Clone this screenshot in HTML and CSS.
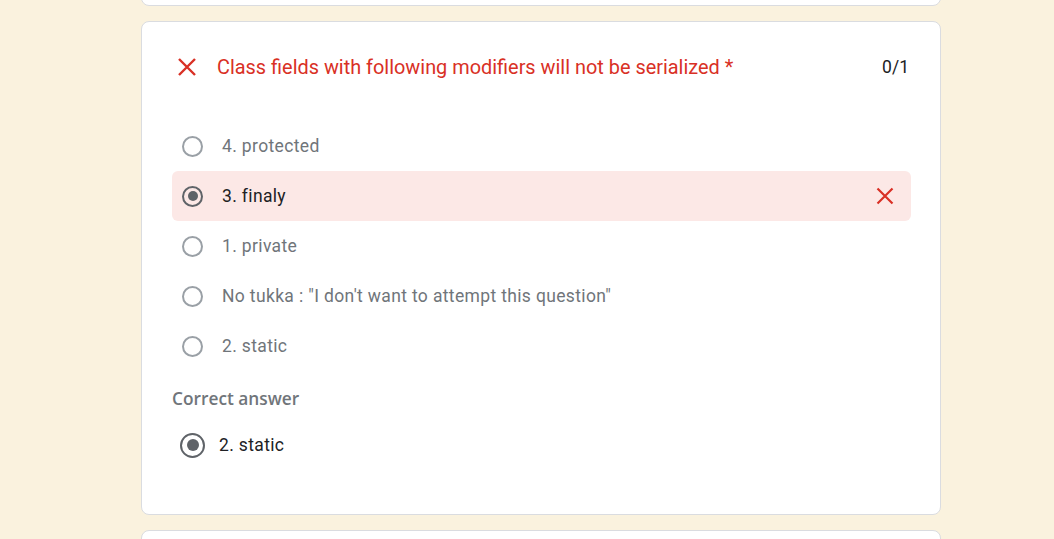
FILE: index.html
```html
<!DOCTYPE html>
<html>
<head>
<meta charset="utf-8">
<link rel="stylesheet" href="styles.css">
</head>
<body>
<div class="page">
  <div class="card card-prev"></div>
  <div class="card question">
    <div class="q-header">
      <svg class="x-icon head-x" viewBox="0 0 20 20" width="20" height="20"><path d="M2 2 L18 18 M18 2 L2 18" stroke="#d93025" stroke-width="2.4" fill="none"/></svg>
      <div class="q-title">Class fields with following modifiers will not be serialized <span class="req">*</span></div>
      <div class="q-score">0/1</div>
    </div>
    <div class="options">
      <div class="opt"><span class="radio"></span><span class="opt-text">4. protected</span></div>
      <div class="opt opt-wrong"><span class="radio checked"></span><span class="opt-text sel">3. finaly</span>
        <svg class="x-icon row-x" viewBox="0 0 18 18" width="18" height="18"><path d="M1.5 1.5 L16.5 16.5 M16.5 1.5 L1.5 16.5" stroke="#d93025" stroke-width="2.2" fill="none"/></svg>
      </div>
      <div class="opt"><span class="radio"></span><span class="opt-text">1. private</span></div>
      <div class="opt"><span class="radio"></span><span class="opt-text">No tukka : "I don't want to attempt this question"</span></div>
      <div class="opt"><span class="radio"></span><span class="opt-text">2. static</span></div>
    </div>
    <div class="correct-label">Correct answer</div>
    <div class="correct-row"><span class="radio checked"></span><span class="opt-text sel">2. static</span></div>
  </div>
  <div class="card card-next"></div>
</div>
</body>
</html>
```
FILE: styles.css
```css
* { box-sizing: border-box; }
html, body { margin: 0; padding: 0; }
body {
  background: #faf2de;
  font-family: Roboto, "Noto Sans", Arial, sans-serif;
  width: 1054px;
  height: 539px;
  overflow: hidden;
}
.page {
  margin-left: 141px;
  width: 800px;
  margin-top: -20px;
  display: flex;
  flex-direction: column;
  gap: 15px;
}
.card {
  background: #fff;
  border: 1px solid #dadce0;
  border-radius: 8px;
  flex: none;
}
.card-prev { height: 26px; }
.card-next { height: 30px; }
.question {
  height: 494px;
  padding: 0 29px 0 30px;
}
.q-header {
  display: flex;
  align-items: center;
  height: 90px;
  padding-left: 5px;
}
.head-x { flex: none; margin-right: 20px; }
.q-title {
  flex: 1;
  color: #d93025;
  font-size: 19.9px;
  letter-spacing: 0;
}
.q-score {
  color: #202124;
  font-size: 17.5px;
  margin-right: 2px;
}
.options {
  margin-top: 9px;
  display: flex;
  flex-direction: column;
}
.opt {
  height: 50px;
  display: flex;
  align-items: center;
  padding-left: 10px;
  border-radius: 6px;
}
.opt-wrong { background: #fce8e6; }
.row-x { margin-left: auto; margin-right: 17px; }
.radio {
  flex: none;
  width: 21px;
  height: 21px;
  border: 2px solid #9aa0a6;
  border-radius: 50%;
  margin-right: 19px;
  position: relative;
}
.radio.checked { border-color: #5f6368; }
.radio.checked::after {
  content: "";
  position: absolute;
  left: 3.5px; top: 3.5px;
  width: 10px; height: 10px;
  border-radius: 50%;
  background: #5f6368;
}
.opt-text {
  font-size: 17.5px;
  letter-spacing: 0.35px;
  color: #70757a;
}
.opt-text.sel { color: #202124; }
.correct-label {
  margin-top: 17px;
  font-family: "Open Sans", Roboto, sans-serif;
  font-weight: 600;
  font-size: 17.3px;
  color: #70757a;
  height: 22px;
  line-height: 22px;
}
.correct-row {
  display: flex;
  align-items: center;
  height: 50px;
  margin-top: 10px;
  padding-left: 8px;
}
.correct-row .radio { width: 25px; height: 25px; margin-right: 14px; }
.correct-row .radio.checked::after { left: 4.5px; top: 4.5px; width: 12px; height: 12px; }
```
